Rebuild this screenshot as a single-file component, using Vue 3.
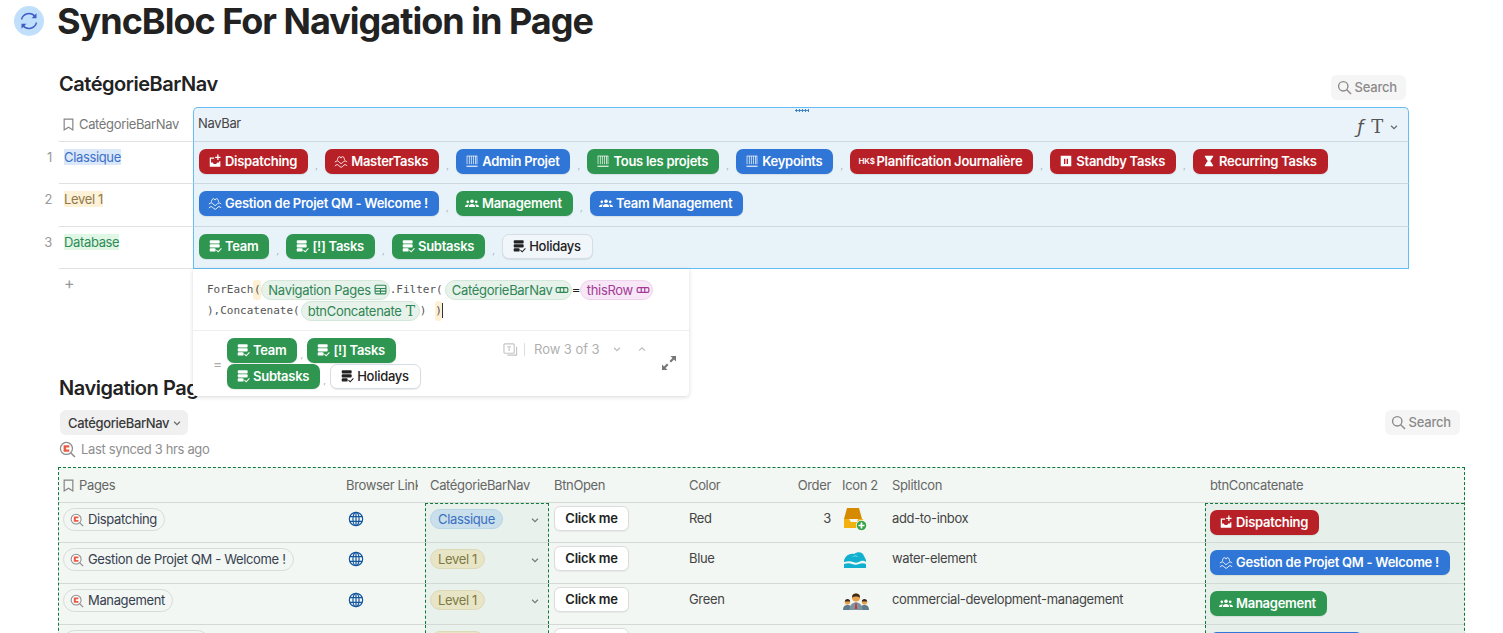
<script setup>
const R = 'red', B = 'blue', G = 'green', W = 'white'
const navRows = [
  { n: 1, label: 'Classique', hl: 'hl-blue', h: 'r42', pills: [
    { t: 'Dispatching', c: R, i: 'inbox' }, { t: 'MasterTasks', c: R, i: 'waves' }, { t: 'Admin Projet', c: B, i: 'fall' },
    { t: 'Tous les projets', c: G, i: 'fall' }, { t: 'Keypoints', c: B, i: 'fall' }, { t: 'Planification Journalière', c: R, i: 'hk' },
    { t: 'Standby Tasks', c: R, i: 'pause' }, { t: 'Recurring Tasks', c: R, i: 'hour' } ] },
  { n: 2, label: 'Level 1', hl: 'hl-yellow', h: 'r43', pills: [
    { t: 'Gestion de Projet QM - Welcome !', c: B, i: 'waves' }, { t: 'Management', c: G, i: 'people' }, { t: 'Team Management', c: B, i: 'people' } ] },
  { n: 3, label: 'Database', hl: 'hl-green', h: 'r42', pills: [
    { t: 'Team', c: G, i: 'db' }, { t: '[!] Tasks', c: G, i: 'db' }, { t: 'Subtasks', c: G, i: 'db' }, { t: 'Holidays', c: W, i: 'db' } ] }
]
const results = [
  [{ t: 'Team', c: G, i: 'db' }, { t: '[!] Tasks', c: G, i: 'db' }],
  [{ t: 'Subtasks', c: G, i: 'db' }, { t: 'Holidays', c: W, i: 'db' }]
]
const pages = [
  { name: 'Dispatching', cat: 'Classique', catC: 'sel-blue', color: 'Red', order: '3', art: 'tray', split: 'add-to-inbox', pill: { t: 'Dispatching', c: R, i: 'inbox' }, h: 'h40' },
  { name: 'Gestion de Projet QM - Welcome !', cat: 'Level 1', catC: 'sel-yellow', color: 'Blue', order: '', art: 'water', split: 'water-element', pill: { t: 'Gestion de Projet QM - Welcome !', c: B, i: 'waves' }, h: 'h41' },
  { name: 'Management', cat: 'Level 1', catC: 'sel-yellow', color: 'Green', order: '', art: 'team', split: 'commercial-development-management', pill: { t: 'Management', c: G, i: 'people' }, h: 'h41' },
  { name: 'Team Management', cat: 'Level 1', catC: 'sel-yellow', color: 'Blue', order: '', art: '', split: '', pill: { t: 'Team Management', c: B, i: 'people' }, h: 'h41' }
]
</script>

<template>
  <div class="page">
    <svg class="defs" aria-hidden="true">
      <symbol id="inbox" viewBox="0 0 24 24"><path fill="currentColor" d="M18 1v3.500h3.500v2.200H18v3.500h-2.200V6.700h-3.500V4.500h3.500V1zM3 6h7.500v2.200H5.200v6.300H8l2 2.500h4l2-2.500h3v-2h2.200V21a1 1 0 0 1-1 1H4a1 1 0 0 1-1-1z"/></symbol>
      <symbol id="waves" viewBox="0 0 24 24"><path fill="none" stroke="currentColor" stroke-width="1.500" d="M6 10c0-6 5-7 6-3 1-4 6-3 6 3M1.500 14c2.500-3 5.500-3 7.500 0s4.500 3 6.500 0 5-3 7 0M1.500 20.500c2.500-3 5.500-3 7.500 0s4.500 3 6.500 0 5-3 7 0"/></symbol>
      <symbol id="fall" viewBox="0 0 24 24"><path fill="none" stroke="currentColor" stroke-width="1.200" d="M3 3.500h18M3.500 3.500v14M7.500 3.500c-.8 5 .8 9 0 14M11 3.500c-.8 5 .8 9 0 14M14.500 3.500c-.8 5 .8 9 0 14M18 3.500c-.8 5 .8 9 0 14M20.500 3.500v14"/><path fill="none" stroke="currentColor" stroke-width="1.800" d="M2.500 21h19"/></symbol>
      <symbol id="people" viewBox="0 0 24 24"><g fill="currentColor"><circle cx="12" cy="9" r="3"/><circle cx="4.800" cy="10" r="2.300"/><circle cx="19.200" cy="10" r="2.300"/><path d="M6.500 19c0-3.500 2.500-5.500 5.500-5.500s5.500 2 5.500 5.500zM0 19c0-3 2-4.500 4.800-4.500.6 0 1.200.1 1.700.3C5.400 16 4.800 17.400 4.800 19zM24 19c0-3-2-4.500-4.800-4.500-.6 0-1.200.1-1.700.3 1.100 1.200 1.700 2.600 1.700 4.200z"/></g></symbol>
      <symbol id="db" viewBox="0 0 24 24"><g fill="currentColor"><rect x="3" y="2" width="17" height="5.500" rx="1.500"/><rect x="3" y="9" width="17" height="5.500" rx="1.500"/><rect x="3" y="16" width="10" height="5.500" rx="1.500"/></g><path fill="none" stroke="currentColor" stroke-width="1.800" d="M14.500 19l3 3 5.500-6"/></symbol>
      <symbol id="pause" viewBox="0 0 24 24"><path fill="currentColor" fill-rule="evenodd" d="M3 3h18v18H3zM8.500 8v9h2.500V8zM13 8v9h2.500V8z"/></symbol>
      <symbol id="hour" viewBox="0 0 24 24"><path fill="currentColor" d="M5 3h14v3h-1.500c-.3 2.800-2 4.500-3.500 6 1.500 1.500 3.200 3.200 3.500 6H19v3H5v-3h1.500c.3-2.800 2-4.500 3.500-6-1.500-1.500-3.200-3.200-3.500-6H5z"/></symbol>
      <symbol id="globe" viewBox="0 0 24 24"><g fill="none" stroke="#14579f" stroke-width="1.800"><circle cx="12" cy="12" r="10"/><ellipse cx="12" cy="12" rx="4.600" ry="10"/><path d="M12 2v20M2.500 8.500h19M2.500 15.500h19"/></g></symbol>
      <symbol id="coda" viewBox="0 0 24 24"><circle cx="10.500" cy="10.500" r="8.500" fill="#fff" stroke="#8d8d8d" stroke-width="1.800"/><path d="M16.500 16.500l6 6" stroke="#8d8d8d" stroke-width="2.200"/><path fill="#ea5a45" d="M6.500 6h8v3h-4.500v3h4.500v3h-8z"/></symbol>
      <symbol id="search" viewBox="0 0 24 24"><g fill="none" stroke="#8a8a8a" stroke-width="2.200"><circle cx="10" cy="10" r="7.500"/><path d="M15.500 15.500l7 7"/></g></symbol>
      <symbol id="mark" viewBox="0 0 24 24"><path fill="none" stroke="#858585" stroke-width="2.200" d="M4 2h16v20l-8-5-8 5z"/></symbol>
      <symbol id="chev" viewBox="0 0 12 12"><path fill="none" stroke="currentColor" stroke-width="1.400" d="M2.500 4.500L6 8l3.500-3.500"/></symbol>
      <symbol id="up" viewBox="0 0 12 12"><path fill="none" stroke="currentColor" stroke-width="1.400" d="M2.500 8L6 4.500 9.500 8"/></symbol>
    </svg>

    <header class="title">
      <span class="doc-icon">
        <svg viewBox="0 0 24 24" width="24" height="24"><path fill="none" stroke="#3f5cc6" stroke-width="1.400" d="M4.500 10.500A7.700 7.700 0 0 1 18 7.500M19.500 13.500A7.700 7.700 0 0 1 6 16.500"/><path fill="#3f5cc6" d="M19.500 4.300v4.900h-4.900zM4.500 19.700v-4.900h4.900z"/></svg>
      </span>
      <h1>SyncBloc For Navigation in Page</h1>
    </header>

    <section class="sec-one">
      <div class="sec-head">
        <h2>CatégorieBarNav</h2>
        <span class="search"><svg class="s-ic"><use href="#search"/></svg>Search</span>
      </div>
      <div class="nav-table">
        <div class="nav-row r35">
          <div class="lead head"><svg class="mark"><use href="#mark"/></svg>CatégorieBarNav</div>
          <div class="main main-head">
            <span class="grip"></span>
            <span class="nav-name">NavBar</span>
            <span class="type-ic"><i class="fx">ƒ</i><i class="tt">T</i><svg class="chev8"><use href="#chev"/></svg></span>
          </div>
        </div>
        <div v-for="row in navRows" :key="row.n" class="nav-row" :class="row.h">
          <span class="num">{{ row.n }}</span>
          <div class="lead"><span :class="row.hl">{{ row.label }}</span></div>
          <div class="main pills" :class="{ last: row.n === 3 }">
            <template v-for="(p, j) in row.pills" :key="j">
              <span v-if="j" class="sep">,</span>
              <span class="pill" :class="p.c">
                <span v-if="p.i === 'hk'" class="hk">HK$</span>
                <svg v-else class="p-ic" :class="p.i"><use :href="'#' + p.i"/></svg>{{ p.t }}
              </span>
            </template>
          </div>
        </div>
        <div class="plus">+</div>
      </div>
    </section>

    <section class="sec-two">
      <h2>Navigation Pages</h2>
      <div class="filter-row">
        <span class="filter">CatégorieBarNav<svg class="chev8"><use href="#chev"/></svg></span>
        <span class="search"><svg class="s-ic"><use href="#search"/></svg>Search</span>
      </div>
      <div class="synced"><svg class="sync-ic"><use href="#coda"/></svg>Last synced 3 hrs ago</div>
      <div class="grid-table">
        <div class="g-row g-head">
          <div class="c c-pages"><svg class="mark"><use href="#mark"/></svg>Pages</div>
          <div class="c"><span class="clip">Browser Link</span></div>
          <div class="c c5">CatégorieBarNav</div>
          <div class="c c5">BtnOpen</div>
          <div class="c c5">Color</div>
          <div class="c c-order">Order</div>
          <div class="c">Icon 2</div>
          <div class="c c5">SplitIcon</div>
          <div class="c c5">btnConcatenate</div>
        </div>
        <div v-for="(r, k) in pages" :key="k" class="g-row" :class="r.h">
          <div class="c"><span class="page-chip"><svg class="chip-ic"><use href="#coda"/></svg>{{ r.name }}</span></div>
          <div class="c"><svg class="globe"><use href="#globe"/></svg></div>
          <div class="c c-sel" :class="{ first: k === 0 }"><span class="sel" :class="r.catC">{{ r.cat }}</span><svg class="chev10"><use href="#chev"/></svg></div>
          <div class="c"><span class="btn">Click me</span></div>
          <div class="c c-text">{{ r.color }}</div>
          <div class="c c-order c-text">{{ r.order }}</div>
          <div class="c c-art">
            <svg v-if="r.art === 'tray'" viewBox="0 0 24 24" width="24" height="24"><path fill="#d68a00" d="M4 1h12l3 11H1z"/><path fill="#f2b10e" d="M1 12h5l2 3h6l1-3h5v9H1z"/><circle cx="18.500" cy="18.500" r="5.500" fill="#fff"/><circle cx="18.500" cy="18.500" r="4.800" fill="#37a34a"/><path stroke="#fff" stroke-width="1.700" d="M18.500 15.500v6M15.500 18.500h6"/></svg>
            <svg v-else-if="r.art === 'water'" viewBox="0 0 24 24" width="24" height="24"><path fill="#12b0cf" d="M1 13c2-5 6-7 10-6 4-3 9-2 10 2l2 4v2c-3-2-5-1-7 0s-4 1-6 0-5-1-9 0z"/><path fill="#8fe0ee" d="M9 10c2-2 5-2 6 0-2-1-4-1-6 0z"/><path fill="#12b0cf" d="M1 17c3-1 6-1 8 0s5 1 7 0 5-1 7 0v4H1z"/></svg>
            <svg v-else-if="r.art === 'team'" viewBox="0 0 26 24" width="26" height="24"><path fill="#5f7a88" d="M0 22c0-3.500 1.500-5 4.500-5s3.500 1 4.500 2v3zM26 22c0-3.500-1.500-5-4.500-5s-3.500 1-4.500 2v3z"/><path fill="#7d95a3" d="M6.500 22c0-5 2.500-7.500 6.500-7.500s6.500 2.500 6.500 7.500z"/><path fill="#d0312d" d="M12.500 14.500h1l.6 6.500h-2.200z"/><circle cx="13" cy="9.500" r="4" fill="#e8a24c"/><path fill="#3c2a20" d="M9 9.500c-.5-5.500 8.500-5.500 8 0-2-1.500-6-1.500-8 0z"/><circle cx="4.500" cy="14" r="2.700" fill="#e8a24c"/><circle cx="21.500" cy="14" r="2.700" fill="#e8a24c"/><path fill="#3c2a20" d="M1.800 13.500c0-3.500 5.400-3.500 5.400 0zM18.800 13.500c0-3.500 5.400-3.500 5.400 0z"/></svg>
          </div>
          <div class="c c-text c-split">{{ r.split }}</div>
          <div class="c c-con" :class="{ first: k === 0 }">
            <span class="pill con" :class="r.pill.c"><svg class="p-ic" :class="r.pill.i"><use :href="'#' + r.pill.i"/></svg>{{ r.pill.t }}</span>
          </div>
        </div>
      </div>
    </section>

    <aside class="popup">
      <div class="formula">
        <div class="f-line">
          <span>ForEach</span><span class="paren">(</span><span class="chip f-green">Navigation Pages
            <svg viewBox="0 0 24 24" width="13" height="13"><g fill="none" stroke="currentColor" stroke-width="2"><rect x="2" y="4" width="20" height="16" rx="2"/><path d="M2 10h20M2 15h20M12 10v10"/></g></svg></span><span class="gap-l">.Filter(</span><span class="chip f-green">CatégorieBarNav
            <svg viewBox="0 0 24 16" width="14" height="10"><g fill="none" stroke="currentColor" stroke-width="2"><rect x="2" y="4" width="20" height="8" rx="2"/><path d="M9 4v8M15 4v8"/></g></svg></span><span class="eq">=</span><span class="chip f-pink">thisRow
            <svg viewBox="0 0 24 16" width="14" height="10"><g fill="none" stroke="currentColor" stroke-width="2"><rect x="2" y="4" width="20" height="8" rx="2"/><path d="M9 4v8M15 4v8"/></g></svg></span>
        </div>
        <div class="f-line">
          <span>),Concatenate(</span><span class="chip f-green chip-t">btnConcatenate <i class="tt-s">T</i></span><span class="gap-l">) </span><span class="paren close">)</span><span class="caret"></span>
        </div>
      </div>
      <div class="result">
        <span class="equals">=</span>
        <div class="res-pills">
          <div v-for="(line, l) in results" :key="l" class="res-line">
            <template v-for="(p, j) in line" :key="j">
              <span v-if="j" class="sep res-sep">,</span>
              <span class="pill" :class="p.c"><svg class="p-ic db"><use :href="'#' + p.i"/></svg>{{ p.t }}</span>
            </template>
          </div>
        </div>
        <div class="row-ctl">
          <svg viewBox="0 0 16 16" width="15" height="15"><g fill="none" stroke="#c4c4c4" stroke-width="1.200"><rect x="1" y="2" width="11" height="10" rx="1"/><path d="M14.500 5v9h-10M4.500 5h4M6.500 5v4.500"/></g></svg>
          <span class="bar"></span>
          <span class="row-txt">Row 3 of 3</span>
          <svg class="ctl-chev down"><use href="#chev"/></svg>
          <svg class="ctl-chev"><use href="#up"/></svg>
        </div>
        <svg class="expand" viewBox="0 0 16 16" width="16" height="16"><path fill="#777" d="M9.500 1H15v5.500l-2-2-3 3L8.500 6l3-3zM6.500 15H1V9.500l2 2 3-3L7.500 10l-3 3z"/></svg>
      </div>
    </aside>
  </div>
</template>

<style scoped>
.page { position: relative; width: 1503px; height: 633px; overflow: hidden; background: #fff; font-family: Inter, "Liberation Sans", sans-serif; color: #222; font-size: 13px; letter-spacing: -0.35px; }
.defs { width: 0; height: 0; position: absolute; }
.title { display: flex; align-items: center; height: 42px; padding-left: 14px; gap: 13px; }
.doc-icon { width: 30px; height: 30px; border-radius: 50%; background: #c0dffb; display: flex; align-items: center; justify-content: center; flex: none; }
h1 { margin: 0; font-size: 36px; line-height: 42px; font-weight: 700; letter-spacing: -1px; color: #222; }
h2 { margin: 0; font-size: 20px; line-height: 26px; font-weight: 600; letter-spacing: -0.47px; color: #222; }
.sec-one { padding: 29px 0 0 59px; width: 1409px; box-sizing: border-box; }
.sec-head { display: flex; justify-content: space-between; align-items: flex-start; height: 36px; padding-right: 3px; }
.search { display: inline-flex; align-items: center; height: 25px; padding: 0 9px 1px 6px; box-sizing: border-box; gap: 3px; background: #f5f5f5; border-radius: 6px; color: #8a8a8a; font-size: 13px; font-weight: 500; margin-top: 4px; letter-spacing: -0.2px; }
.s-ic { width: 15px; height: 15px; }
.nav-table { width: 1350px; }
.nav-row { display: flex; position: relative; }
.r35 { height: 35px; }
.r42 { height: 42px; }
.r43 { height: 43px; }
.lead { width: 134px; flex: none; box-sizing: border-box; border-bottom: 1px solid #dfe2e4; padding: 7px 5px 0; color: #555; line-height: 17px; }
.lead.head { display: flex; align-items: center; padding: 0 0 0 3px; gap: 4px; color: #777; height: 35px; }
.mark { width: 13px; height: 15px; flex: none; }
.num { position: absolute; left: -22px; width: 15px; top: 7px; text-align: right; color: #999; font-size: 13px; line-height: 17px; }
.hl-blue { background: #dbe8fa; color: #3d70c9; }
.hl-yellow { background: #fdf1d7; color: #8d7a4d; }
.hl-green { background: #e1f7e6; color: #2e8b57; }
.main { flex: none; width: 1216px; box-sizing: border-box; background: #e7f2f9; border-left: 1px solid #64bdf5; border-right: 1px solid #64bdf5; border-bottom: 1px solid #cbd8e0; }
.main.last { border-bottom-color: #64bdf5; }
.main-head { position: relative; display: flex; align-items: center; justify-content: space-between; padding: 0 9px 3px 4px; background: #eaf3fa; border-top: 1px solid #64bdf5; border-top-left-radius: 5px; border-top-right-radius: 5px; color: #444; }
.grip { position: absolute; left: 601px; top: 1px; width: 14px; height: 3px; background: radial-gradient(circle, #3f84c8 1px, transparent 1.2px) 0 0 / 3px 3px; }
.type-ic { display: inline-flex; align-items: center; gap: 8px; color: #555; height: 20px; padding-top: 7px; }
.fx { font-family: "DejaVu Sans", sans-serif; font-size: 18px; font-style: italic; line-height: 20px; }
.tt { font-family: "DejaVu Serif", serif; font-style: normal; font-size: 18px; line-height: 20px; margin-right: -4px; }
.chev8 { width: 10px; height: 10px; color: #666; margin-left: 2px; }
.pills { display: flex; align-items: flex-start; padding: 7px 0 0 5px; }
.pill { display: inline-flex; align-items: center; height: 25px; box-sizing: border-box; padding: 0 11px 1px 9px; border-radius: 7px; font-size: 13px; font-weight: 600; white-space: nowrap; color: #fff; flex: none; letter-spacing: -0.27px; box-shadow: 0 1px 1px rgba(0,0,0,.08); }
.red { background: #b82027; }
.blue { background: #2f76d6; }
.green { background: #2e9650; }
.white { background: #f1f6fa; border: 1px solid #d6dde3; color: #222; font-weight: 500; }
.popup .white { background: #fff; }
.p-ic { width: 14px; height: 14px; margin-right: 3px; flex: none; }
.hk { width: 15px; font-size: 8px; font-weight: 600; margin-right: 3px; margin-left: -1px; letter-spacing: -0.1px; }
.sep { flex: 0 0 17px; width: 17px; text-align: left; padding: 11px 0 0 7px; box-sizing: border-box; font-size: 9px; line-height: 12px; color: #9fb0bd; font-weight: 400; }
.plus { padding: 4px 0 0 5px; height: 30px; box-sizing: border-box; color: #999; font-size: 16px; line-height: 20px; }

.sec-two { padding: 0 38px 0 58px; margin-top: 76px; }
.sec-two h2 { margin-left: 1px; }
.filter-row { display: flex; justify-content: space-between; align-items: center; margin-top: 9px; height: 25px; padding-left: 2px; }
.filter-row .search { margin: 0 5px 0 0; }
.filter { display: inline-flex; align-items: center; height: 25px; padding: 0 6px 0 8px; background: #f0f0f0; border-radius: 6px; font-weight: 500; color: #3a3a3a; gap: 1px; }
.synced { display: flex; align-items: center; height: 18px; margin-top: 5px; color: #8e8e8e; gap: 5px; }
.sync-ic { width: 17px; height: 17px; margin-left: 1px; }
.grid-table { margin-top: 9px; width: 1407px; border: 1px dashed #0d7a3a; border-bottom: 0; box-sizing: border-box; background: #f2f7f3; }
.g-row { display: grid; grid-template-columns: 283px 83px 124px 135px 86px 68px 49px 318px 259px; border-bottom: 1px solid #d5d9d6; box-sizing: border-box; }
.g-head { height: 35px; color: #666; align-items: center; }
.g-head .c { padding-top: 0; line-height: 17px; }
.h40 { height: 40px; }
.h41 { height: 41px; }
.c { padding: 5px 4px 0; box-sizing: border-box; min-width: 0; line-height: 17px; }
.g-head .c5 { padding-left: 5px; }
.c-pages { display: flex; align-items: center; gap: 4px; padding-left: 3px; }
.clip { display: block; width: 72px; overflow: hidden; white-space: nowrap; }
.c-order { text-align: right; padding-right: 7px; }
.c-text { padding-top: 7px; padding-left: 5px; color: #444; }
.c-split { padding-top: 7px; }
.c-art { padding: 4px 0 0 5px; }
.page-chip { display: inline-flex; align-items: center; height: 23px; box-sizing: border-box; padding: 0 7px 0 6px; border: 1px solid #dadada; border-radius: 12px; color: #37404f; white-space: nowrap; gap: 4px; }
.chip-ic { width: 14px; height: 14px; flex: none; }
.globe { display: block; width: 16px; height: 16px; margin: 3px 0 0 2px; }
.c-sel { display: flex; justify-content: space-between; align-items: flex-start; background: #e9f1ec; border-left: 1px dashed #0d7a3a; border-right: 1px dashed #0d7a3a; padding: 6px 8px 0 4px; }
.c-sel.first, .c-con.first { border-top: 1px dashed #0d7a3a; padding-top: 5px; }
.sel { display: inline-flex; align-items: center; height: 20px; box-sizing: border-box; padding: 0 7px; border-radius: 10px; border: 1px solid transparent; }
.sel-blue { background: #c9dfec; border-color: #b9d4e4; color: #3a6fc0; }
.sel-yellow { background: #e7e5c6; border-color: #dcdab6; color: #7d7a45; }
.chev10 { width: 10px; height: 10px; color: #777; margin-top: 6px; }
.btn { display: inline-flex; align-items: center; justify-content: center; width: 75px; height: 25px; background: #fff; border: 1px solid #dcdcdc; border-radius: 6px; font-weight: 600; box-sizing: border-box; color: #222; margin: -2px 0 0 1px; letter-spacing: -0.2px; box-shadow: 0 1px 1px rgba(0,0,0,.05); }
.c-con { background: #e6efea; border-left: 1px dashed #0d7a3a; padding: 7px 0 0 4px; }
.c-con.first { padding-top: 6px; }
.con { height: 25px; }

.popup { position: absolute; left: 193px; top: 269px; width: 496px; height: 127px; background: #fff; border-radius: 0 0 4px 4px; box-shadow: 0 1px 4px rgba(0,0,0,.16); }
.formula { height: 62px; box-sizing: border-box; padding: 10px 0 0 14px; border-bottom: 1px solid #eee; font-family: "DejaVu Sans Mono", monospace; font-size: 11px; color: #555; letter-spacing: 0; }
.f-line { display: flex; align-items: center; height: 21px; white-space: pre; }
.paren { background: #fdf0d5; border-radius: 3px; width: 8px; height: 20px; line-height: 20px; text-align: center; }
.paren.close { width: 7px; }
.caret { width: 1px; height: 15px; background: #333; }
.chip { display: inline-flex; align-items: center; height: 20px; box-sizing: border-box; padding: 0 2px 0 6px; gap: 3px; border-radius: 10px; font-family: Inter, "Liberation Sans", sans-serif; font-size: 13px; white-space: normal; letter-spacing: -0.3px; }
.chip svg { flex: none; }
.chip-t { margin-left: 1px; }
.f-green { background: #e7f2ea; border: 1px solid #d3e6da; color: #2f8555; }
.f-pink { background: #f8e7f6; border: 1px solid #efd3ec; color: #a33a96; }
.tt-s { font-family: "DejaVu Serif", serif; font-style: normal; font-size: 14px; margin: 0 2px 0 1px; }
.gap-l { margin-right: 2px; }
.eq { color: #222; font-size: 12px; }
.result { position: relative; display: flex; height: 64px; padding-left: 20px; }
.equals { color: #aaa; font-size: 14px; margin-top: 24px; width: 14px; }
.res-pills { padding-top: 7px; width: 270px; }
.res-line { display: flex; height: 26px; }
.res-sep { flex-basis: 10px; width: 10px; padding-left: 3px; }
.row-ctl { display: flex; align-items: center; height: 20px; margin-top: 8px; color: #b0b0b0; position: absolute; left: 310px; }
.row-txt { letter-spacing: -0.05px; }
.bar { width: 1px; height: 13px; background: #ddd; margin: 0 9px 0 6px; }
.ctl-chev { width: 10px; height: 10px; color: #bbb; margin-left: 15px; }
.ctl-chev.down { margin-left: 12px; }
.expand { position: absolute; left: 468px; top: 24px; }
</style>

<style>
html, body { margin: 0; overflow: hidden; }
</style>
